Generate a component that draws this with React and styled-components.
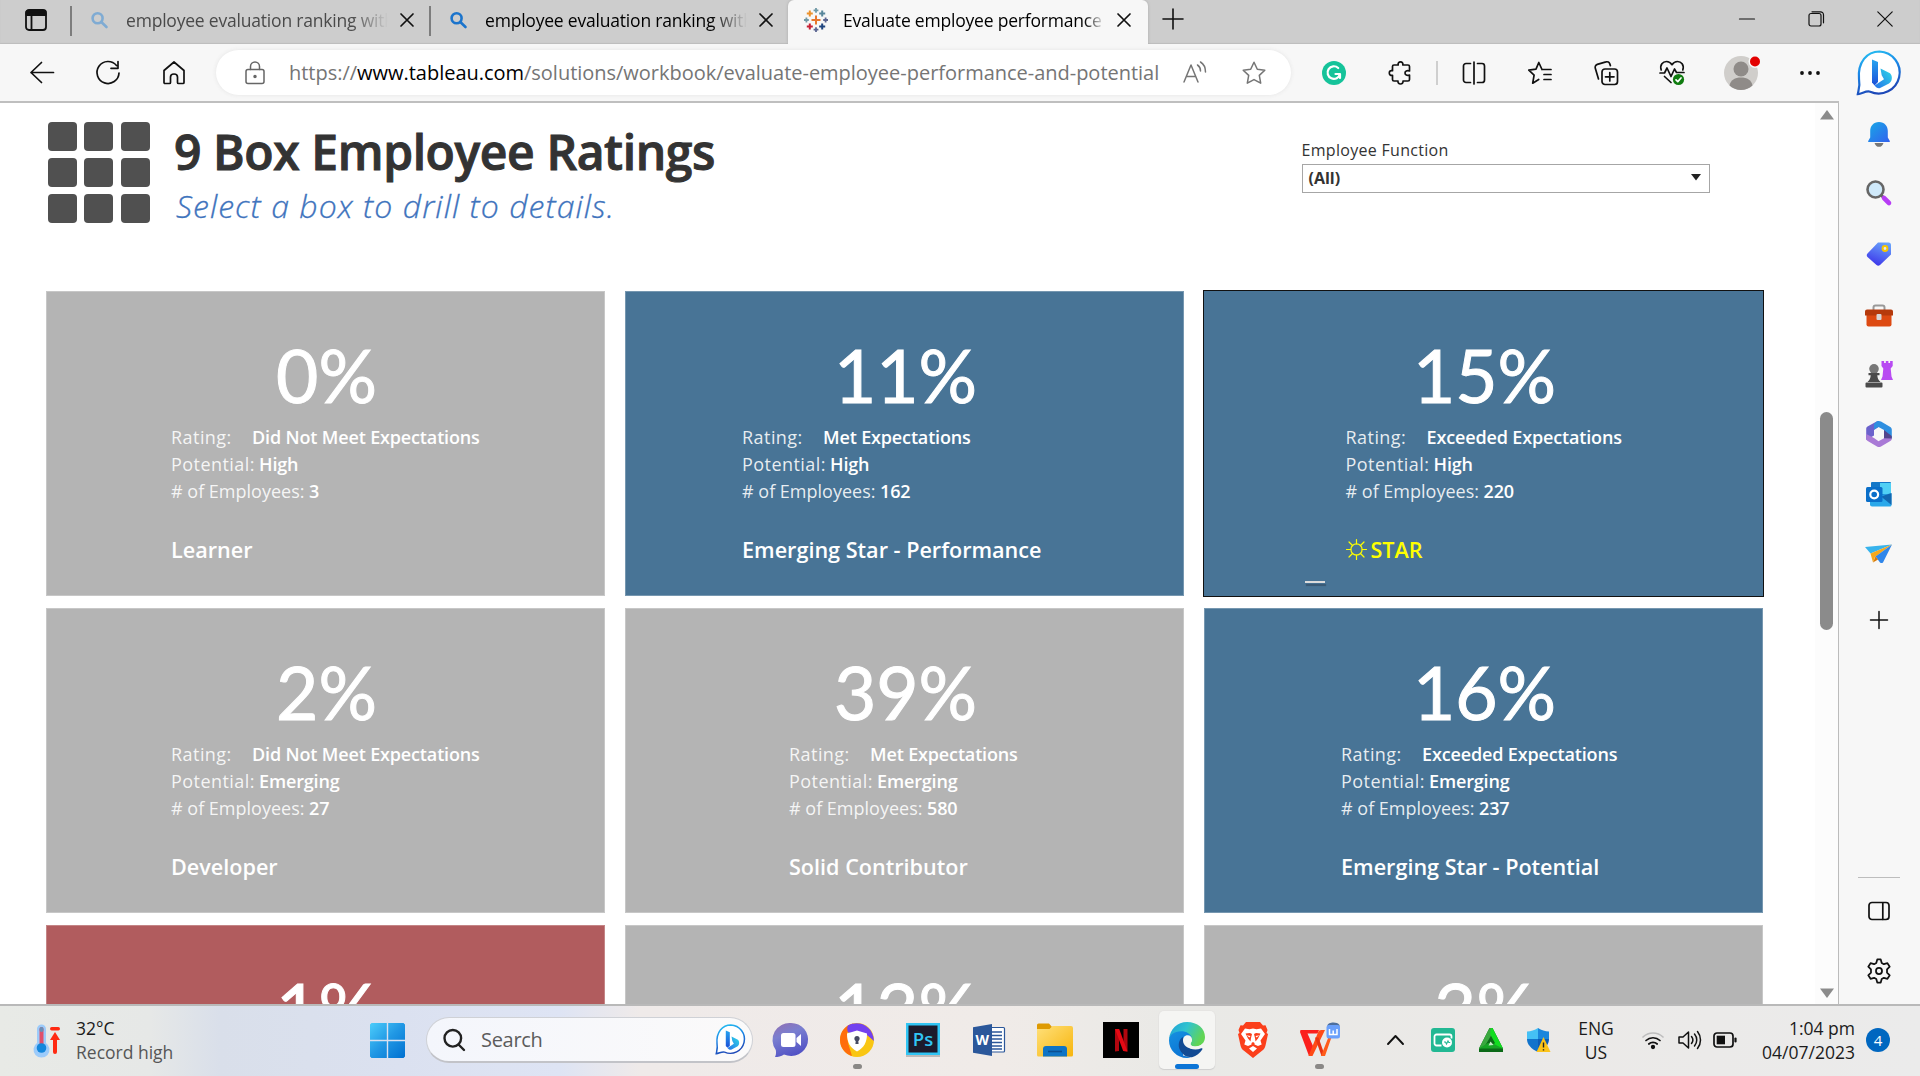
import React from "react";
import styled, { createGlobalStyle, css } from "styled-components";

const ui = `"Open Sans", "Noto Sans", sans-serif`;
const book = `"Open Sans", "Noto Sans", sans-serif`;
const figures = `Lato, "Open Sans", sans-serif`;

const Global = createGlobalStyle`
  * { box-sizing: border-box; }
  html, body { margin: 0; padding: 0; background: #fff; }
  body { font-family: ${ui}; color: #111; overflow: hidden; }
  svg { display: block; flex: none; overflow: visible; }
`;

/* ---------- window frame ---------- */
const Window = styled.div`
  width: 1920px;
  height: 1076px;
  display: flex;
  flex-direction: column;
  overflow: hidden;
`;
const TabStrip = styled.header`
  flex: none;
  height: 44px;
  display: flex;
  align-items: stretch;
  background: #cdcdcd;
  box-shadow: inset 0 -1px 1px #bdbdbd;
`;
const TabMenu = styled.div`
  width: 71px;
  display: flex;
  align-items: center;
  padding: 0 0 4px 25px;
`;
const Tab = styled.div`
  width: ${(p) => p.$w}px;
  display: flex;
  align-items: center;
  padding: 0 0 4px ${(p) => p.$pad}px;
  ${(p) =>
    p.$active &&
    css`
      background: #f7f7f7;
      border-radius: 6px 6px 0 0;
      box-shadow: 0 0 3px #aaa;
    `}
`;
const TabTitle = styled.span`
  flex: none;
  width: 262px;
  margin-left: ${(p) => p.$gap}px;
  overflow: hidden;
  white-space: nowrap;
  font-size: 17.5px;
  line-height: 26px;
  letter-spacing: -0.2px;
  color: ${(p) => (p.$dim ? "#4a4a4a" : "#000")};
  mask-image: linear-gradient(90deg, #000 ${(p) => p.$fade || 86}%, transparent 100%);
`;
const CloseSlot = styled.span`
  flex: none;
  margin-left: 12px;
`;
const TabRule = styled.i`
  align-self: flex-start;
  width: 2px;
  height: 30px;
  margin-top: 6px;
  margin-left: ${(p) => p.$shift || 0}px;
  background: #7d7d7d;
`;
const NewTab = styled.div`
  display: flex;
  align-items: center;
  padding: 0 0 6px 14px;
`;
const Controls = styled.div`
  margin-left: auto;
  width: 208px;
  display: flex;
  align-items: center;
  padding-bottom: 6px;
`;
const Control = styled.div`
  width: 69.5px;
  display: flex;
  justify-content: center;
`;

const Browser = styled.div`
  flex: none;
  height: 960px;
  display: flex;
  background: #f7f7f7;
`;
const Page = styled.div`
  width: 1839px;
  display: flex;
  flex-direction: column;
`;

/* ---------- toolbar ---------- */
const Toolbar = styled.nav`
  flex: none;
  height: 59px;
  display: flex;
  align-items: center;
  padding-left: 9px;
  border-bottom: 2px solid #bfbfbf;
  background: #f7f7f7;
`;
const Slot = styled.div`
  flex: none;
  width: ${(p) => p.$w || 66}px;
  display: flex;
  justify-content: center;
  align-items: center;
`;
const Address = styled.div`
  flex: none;
  width: 1075px;
  height: 45px;
  margin: 0 10px 0 9px;
  border-radius: 23px;
  background: #fff;
  box-shadow: 0 0 4px #e4e4e4;
  display: flex;
  align-items: center;
  padding-left: 29px;
`;
const Url = styled.div`
  flex: none;
  width: 876px;
  margin-left: 24px;
  font-size: 20px;
  line-height: 28px;
  letter-spacing: -0.02px;
  white-space: nowrap;
  color: #757575;
  b { font-weight: 400; color: #000; }
`;
const AddressIcon = styled.div`
  flex: none;
  width: 59px;
  display: flex;
  justify-content: center;
`;
const ToolRule = styled.i`
  flex: none;
  width: 2px;
  height: 24px;
  margin: 0 3px 0 3px;
  background: #cfcfcf;
`;

/* ---------- workbook ---------- */
const Content = styled.div`
  flex: 1;
  min-height: 0;
  display: flex;
`;
const Workbook = styled.main`
  width: 1815px;
  overflow: hidden;
  background: #fff;
  font-family: ${book};
  padding: 19px 0 0 46px;
`;
const Head = styled.div`
  height: 169px;
  display: flex;
`;
const BoxLogo = styled.div`
  display: grid;
  grid-template-columns: repeat(3, 29px);
  grid-auto-rows: 29px;
  column-gap: 7.5px;
  row-gap: 7px;
  align-content: start;
  margin-left: 1.5px;
  i { background: #505050; border-radius: 4px; }
`;
const Titles = styled.div`
  flex: none;
  width: 1125px;
  padding-left: 24.5px;
`;
const Title = styled.h1`
  margin: -2px 0 0;
  font-size: 48px;
  line-height: 64px;
  font-weight: 600;
  letter-spacing: -0.4px;
  color: #333;
  white-space: nowrap;
  -webkit-text-stroke: 1px #333;
`;
const Subtitle = styled.p`
  margin: -1px 0 0 2px;
  font-size: 32px;
  line-height: 46px;
  font-style: italic;
  font-weight: 300;
  letter-spacing: 1.05px;
  color: #3f74bd;
  white-space: nowrap;
  -webkit-text-stroke: 0.3px #3f74bd;
`;
const Filter = styled.label`
  display: block;
  flex: none;
  width: 408px;
  margin-left: 27px;
  padding-top: 16px;
  font-size: 16px;
  line-height: 24px;
  letter-spacing: 0.3px;
  color: #333;
`;
const Select = styled.div`
  height: 29px;
  margin-top: 2px;
  padding: 0 8px 2px 6px;
  border: 1px solid #a6a6a6;
  display: flex;
  align-items: center;
  justify-content: space-between;
  font-size: 16px;
  font-weight: 700;
  letter-spacing: 0;
`;
const Boxes = styled.section`
  display: grid;
  grid-template-columns: repeat(3, 559px);
  grid-auto-rows: 305px;
  column-gap: 20px;
  row-gap: 12px;
`;
const tones = { gray: "#b4b4b4", blue: "#487496", red: "#b15c5e" };
const Box = styled.article`
  position: relative;
  padding-top: 33px;
  background: ${(p) => tones[p.$tone]};
  color: #fff;
  box-shadow: ${(p) => (p.$selected ? "0 0 0 1px #111" : "inset 0 0 0 1px rgba(255,255,255,.25)")};
`;
const Percent = styled.div`
  height: 100px;
  line-height: 103px;
  font-family: ${figures};
  font-size: 73px;
  text-align: center;
  padding-left: 2px;
  -webkit-text-stroke: 1px #fff;
`;
const Facts = styled.div`
  padding-left: ${(p) => p.$inset}px;
  font-size: 18px;
  line-height: 27px;
  white-space: pre;
  b { font-weight: 600; letter-spacing: -0.15px; }
`;
const Key = styled.span`
  display: inline-block;
  width: ${(p) => p.$w}px;
  letter-spacing: ${(p) => p.$ls || 0}px;
  color: rgba(255, 255, 255, 0.88);
`;
const BoxName = styled.div`
  display: flex;
  align-items: center;
  gap: 4px;
  margin-top: 28.5px;
  padding-left: ${(p) => p.$inset}px;
  font-size: 21.6px;
  line-height: 32px;
  font-weight: 600;
  color: ${(p) => (p.$star ? "#ffff00" : "#fff")};
  white-space: nowrap;
`;
const Dash = styled.i`
  position: absolute;
  left: 101px;
  bottom: 13px;
  width: 20px;
  height: 2px;
  background: #dcdcdc;
  box-shadow: 1px 3px 1px rgba(40, 60, 80, 0.5);
`;
const ScrollTrack = styled.div`
  width: 24px;
  background: #fcfcfc;
  border-right: 1px solid #bcbcbc;
  display: flex;
  flex-direction: column;
  align-items: center;
  padding: 7px 0 6px;
`;
const Thumb = styled.i`
  width: 13px;
  height: 218px;
  margin-top: 292px;
  margin-bottom: auto;
  border-radius: 7px;
  background: #8b8b8b;
`;

/* ---------- sidebar ---------- */
const Sidebar = styled.aside`
  width: 81px;
  display: flex;
  flex-direction: column;
  align-items: center;
  padding-right: 1px;
`;
const SideItem = styled.div`
  flex: none;
  height: ${(p) => p.$h || 60}px;
  display: flex;
  align-items: center;
`;
const SideRule = styled.i`
  width: 42px;
  height: 1px;
  margin-top: auto;
  margin-bottom: 7px;
  background: #bdbdbd;
`;

/* ---------- taskbar ---------- */
const Taskbar = styled.footer`
  flex: 1;
  display: flex;
  align-items: center;
  border-top: 2px solid #b9b9b9;
  padding-bottom: 2px;
  background: linear-gradient(90deg, #e8eae6 0, #e6e8e7 150px, #d9dfea 220px, #dbe1f0 400px, #dee4f4 560px, #efeae9 640px, #f0ebe8 1000px, #e9e9e6 1180px, #ebe9e7 1500px, #ebebeb 1920px);
`;
const Weather = styled.div`
  width: 354px;
  display: flex;
  align-items: center;
  padding-left: 33px;
  gap: 15px;
`;
const TwoLines = styled.div`
  font-size: 17.5px;
  line-height: 24px;
  white-space: nowrap;
  text-align: ${(p) => p.$align || "left"};
  width: ${(p) => (p.$w ? p.$w + "px" : "auto")};
  color: #1b1b1b;
  span { color: #565656; }
`;
const SearchBox = styled.div`
  width: 327px;
  height: 46px;
  margin: 0 5px;
  border-radius: 23px;
  border: 1px solid #cfd1d6;
  border-bottom: 2px solid #c2c3c8;
  background: linear-gradient(90deg, #f4f6fc, #fbfafa);
  display: flex;
  align-items: center;
  padding: 0 6px 0 16px;
  font-size: 20px;
  color: #5c5c5c;
  span { flex: 1; padding-left: 16px; letter-spacing: -0.3px; }
`;
const TaskButton = styled.div`
  position: relative;
  flex: none;
  width: 66px;
  height: 58px;
  display: flex;
  align-items: center;
  justify-content: center;
  &::before {
    content: "";
    position: absolute;
    z-index: 0;
    inset: 0 5px;
    border-radius: 5px;
    background: ${(p) => (p.$on ? "#f5f5f3" : "transparent")};
    box-shadow: ${(p) => (p.$on ? "0 1px 1px #cfcfcf, 0 0 0 1px #e6e5e3" : "none")};
  }
  &::after {
    content: "";
    position: absolute;
    bottom: ${(p) => (p.$on ? 0 : 0)}px;
    width: ${(p) => (p.$on ? 24 : p.$run ? 9 : 0)}px;
    height: 5px;
    border-radius: 3px;
    background: ${(p) => (p.$on ? "#0b74d6" : "#8a8886")};
  }
  svg { position: relative; }
`;
const Gap = styled.i`
  flex: none;
  width: ${(p) => p.$w}px;
`;
const Badge = styled.span`
  width: 24px;
  height: 24px;
  margin-left: 11px;
  border-radius: 50%;
  background: #0067c0;
  color: #fff;
  font-size: 15px;
  line-height: 24px;
  text-align: center;
`;

/* ---------- icons ---------- */
const Ico = ({ s = 24, w, h, sw = 1.5, c = "#111", fill = "none", vb, children }) => (
  <svg width={w || s} height={h || s} viewBox={vb || `0 0 ${w || s} ${h || s}`} fill={fill} stroke={c} strokeWidth={sw} strokeLinecap="round" strokeLinejoin="round">
    {children}
  </svg>
);
const Close = () => <Ico s={14} sw={1.7}><path d="M1 1l12 12M13 1L1 13" /></Ico>;
const Lens = ({ c }) => <Ico s={17} sw={2.6} c={c}><circle cx="6.6" cy="6.2" r="5" /><path d="M10.3 10L15.5 15" /></Ico>;
const TableauMark = () => {
  const cross = (x, y, r, c, k, w = 2) => <path key={k} d={`M${x - r} ${y}h${2 * r}M${x} ${y - r}v${2 * r}`} stroke={c} strokeWidth={w} />;
  return (
    <svg width="24" height="24" viewBox="0 0 24 24">
      {cross(12, 12, 4.5, "#e8762d", "a", 2)}
      {cross(12, 2.4, 2.4, "#7099a6", "b", 1.8)}
      {cross(12, 21.6, 2.4, "#5b6591", "c", 1.8)}
      {cross(2.4, 12, 2.4, "#7099a6", "d", 1.8)}
      {cross(21.6, 12, 2.4, "#5b6591", "e", 1.8)}
      {cross(5.8, 5.6, 3, "#eb912c", "f", 2)}
      {cross(18.2, 5.6, 3, "#59879b", "g", 2)}
      {cross(5.8, 18.4, 3, "#c72035", "h", 2)}
      {cross(18.2, 18.4, 3, "#1f447e", "i", 2)}
    </svg>
  );
};
const Bing = ({ w = 46 }) => (
  <svg width={w} height={w} viewBox="0 0 46 46">
    <defs>
      <linearGradient id="bo" x1="0" y1="0" x2="0.3" y2="1"><stop offset="0" stopColor="#27c4f2" /><stop offset=".5" stopColor="#1b86e6" /><stop offset="1" stopColor="#1d49b8" /></linearGradient>
      <linearGradient id="bi" x1="0" y1="0" x2="0" y2="1"><stop offset="0" stopColor="#27a5f0" /><stop offset="1" stopColor="#1b4fd8" /></linearGradient>
      <linearGradient id="bj" x1="1" y1="0" x2="0" y2="1"><stop offset="0" stopColor="#2fd9e6" /><stop offset="1" stopColor="#2672ea" /></linearGradient>
    </defs>
    <path d="M23.5 1.5a21 21 0 1 1-9.3 40.2c-4-1.3-8 2-12.4 2.4C2.5 40 4.3 36 3 29 1.5 12 11 1.5 23.5 1.5z" fill="#fff" stroke="url(#bo)" strokeWidth="2.2" />
    <path d="M16 9.5l6 2.6v20l-3.4 3.3L16 32.5z" fill="url(#bi)" />
    <path d="M24.5 18.5l9.500 4.800c3 3 2.200 8.200-1 10.200l-9 4.600c-2 .7-4.200-.8-5.400-2.600l9.400-6.200-2.300-4z" fill="url(#bj)" />
  </svg>
);
const Gear = () => (
  <Ico s={26} sw={1.6} vb="0 0 24 24">
    <circle cx="12" cy="12" r="2.8" />
    <path d="M10.4 1.300h3.200l.9 3.300 2 1.100 3.300-.9 2.100 3.200-2.500 2.500v3l2.500 2.500-2.100 3.200-3.300-.9-2 1.100-.9 3.300h-3.200l-.9-3.300-2-1.100-3.300.9-2.100-3.200 2.500-2.500v-3L2.100 8l2.100-3.200 3.300.9 2-1.100z" />
  </Ico>
);

/* ---------- data ---------- */
const boxes = [
  { pct: "0%", tone: "gray", rating: "Did Not Meet Expectations", pot: "High", n: "3", name: "Learner", inset: 125 },
  { pct: "11%", tone: "blue", rating: "Met Expectations", pot: "High", n: "162", name: "Emerging Star - Performance", inset: 117 },
  { pct: "15%", tone: "blue", rating: "Exceeded Expectations", pot: "High", n: "220", name: "STAR", inset: 141.5, star: true },
  { pct: "2%", tone: "gray", rating: "Did Not Meet Expectations", pot: "Emerging", n: "27", name: "Developer", inset: 125 },
  { pct: "39%", tone: "gray", rating: "Met Expectations", pot: "Emerging", n: "580", name: "Solid Contributor", inset: 164 },
  { pct: "16%", tone: "blue", rating: "Exceeded Expectations", pot: "Emerging", n: "237", name: "Emerging Star - Potential", inset: 137 },
  { pct: "1%", tone: "red" },
  { pct: "13%", tone: "gray" },
  { pct: "3%", tone: "gray" },
];

const RatingBox = ({ b }) => (
  <Box $tone={b.tone} $selected={b.star}>
    <Percent>{b.pct}</Percent>
    {b.name && (
      <>
        <Facts $inset={b.inset}>
          <div><Key $w={81} $ls={0.45}>Rating:</Key><b>{b.rating}</b></div>
          <div><Key $w={88} $ls={0.45}>Potential:</Key><b>{b.pot}</b></div>
          <div><Key $w={138}># of Employees:</Key><b>{b.n}</b></div>
        </Facts>
        <BoxName $inset={b.inset} $star={b.star}>
          {b.star && (
            <Ico s={21} sw={1.2} c="#ffff00">
              <circle cx="10.5" cy="10.5" r="5.6" />
              <path d="M10.5 4.800V.5M10.5 16.200v4.300M4.800 10.500H.5M16.200 10.500h4.300M6.500 6.500L3 3M14.500 14.500L18 18M6.500 14.500L3 18M14.500 6.500L18 3" />
            </Ico>
          )}
          {b.name}
        </BoxName>
      </>
    )}
    {b.star && <Dash />}
  </Box>
);

const WindowTabs = () => (
  <TabStrip>
    <TabMenu>
      <Ico w={22} h={22} sw={1.8}><rect x="1" y="1" width="20" height="20" rx="3" /><path d="M1.500 2.500h19v3.500h-19z" fill="#111" /><path d="M6.500 6v15" /></Ico>
    </TabMenu>
    <TabRule $shift={-1} />
    <Tab $w={357} $pad={19}>
      <Lens c="#7fabd3" />
      <TabTitle $gap={18} $dim>employee evaluation ranking with</TabTitle>
      <CloseSlot><Close /></CloseSlot>
    </Tab>
    <TabRule />
    <Tab $w={357} $pad={19}>
      <Lens c="#1b74cc" />
      <TabTitle $gap={18}>employee evaluation ranking with</TabTitle>
      <CloseSlot><Close /></CloseSlot>
    </Tab>
    <Tab $w={360} $pad={16} $active>
      <TableauMark />
      <TabTitle $gap={15} $fade={92}>Evaluate employee performance a</TabTitle>
      <CloseSlot><Close /></CloseSlot>
    </Tab>
    <NewTab><Ico s={22} sw={1.6}><path d="M11 1v20M1 11h20" /></Ico></NewTab>
    <Controls>
      <Control><Ico s={16} sw={1.2}><path d="M.5 8h15" /></Ico></Control>
      <Control><Ico s={16} sw={1.2}><rect x="1" y="2.500" width="12" height="12.500" rx="2" /><path d="M4 .8h8.500a3 3 0 0 1 3 3v8" /></Ico></Control>
      <Control><Ico s={16} sw={1.2}><path d="M.8.8l14.400 14.400M15.200.8L.8 15.200" /></Ico></Control>
    </Controls>
  </TabStrip>
);

const BrowserToolbar = () => (
  <Toolbar>
    <Slot><Ico s={24} sw={1.7}><path d="M23.500 11.500H1M11.500 1.500L1 11.500l10.500 10" /></Ico></Slot>
    <Slot><Ico s={24} sw={1.7}><path d="M20.500 4.500A11 11 0 1 0 23 12M22 .5v6.800h-7" /></Ico></Slot>
    <Slot><Ico s={24} sw={1.7}><path d="M2 9.500L12 1l10 8.500V21.500a1 1 0 0 1-1 1h-4.500a1 1 0 0 1-1-1V16c0-2-1.300-3-3.500-3s-3.500 1-3.500 3v5.500a1 1 0 0 1-1 1H3a1 1 0 0 1-1-1z" /></Ico></Slot>
    <Address>
      <Ico w={20} h={24} sw={1.5} c="#666"><rect x="1" y="8.500" width="18" height="14" rx="2" /><path d="M5.500 8.500V5.500a4.500 4.500 0 0 1 9 0v3" /><circle cx="10" cy="15.500" r="1" fill="#666" /></Ico>
      <Url>https://<b>www.tableau.com</b>/solutions/workbook/evaluate-employee-performance-and-potential</Url>
      <AddressIcon><Ico s={24} c="#757575"><path d="M1 21L8 4l7 17M3.500 15.500h9M14.500 4c2 1.300 3 3.200 3 6M17.500 1c3.500 2.200 5 5.500 5 10" /></Ico></AddressIcon>
      <AddressIcon><Ico s={24} c="#757575"><path d="M12 1.200l3.300 7 7.500 1-5.500 5.200 1.400 7.800L12 18.600l-6.700 3.600 1.400-7.800L1.200 9.200l7.500-1z" /></Ico></AddressIcon>
    </Address>
    <Slot>
      <Ico s={24} c="#fff" sw={2.2}><circle cx="12" cy="12" r="12" fill="#15c39a" stroke="none" /><path d="M16.200 7A6.300 6.300 0 1 0 18 13h-4.500M18 13v4" /></Ico>
    </Slot>
    <Slot><Ico s={24} sw={1.7}><path d="M6 4h4.200c-.4-1.900.6-3.200 2.300-3.200S15.200 2.100 14.800 4H20a1.500 1.500 0 0 1 1.500 1.500V10c-2.500-.8-4.500 0-4.500 2s2 2.800 4.500 2v4.500A1.500 1.500 0 0 1 20 20h-5c.3 1.800-.8 3-2.500 3s-2.800-1.200-2.500-3H6a1.500 1.500 0 0 1-1.500-1.500v-4.200c-2 .5-3.200-.6-3.200-2.300s1.200-2.800 3.200-2.300V5.500A1.500 1.500 0 0 1 6 4z" /></Ico></Slot>
    <ToolRule />
    <Slot><Ico s={24} sw={1.7}><path d="M12 1v22M8.500 2.500H4a2.500 2.500 0 0 0-2.500 2.500v14A2.500 2.500 0 0 0 4 21.500h4.500M15.500 2.500H20A2.500 2.500 0 0 1 22.500 5v14a2.500 2.500 0 0 1-2.500 2.500h-4.500" /></Ico></Slot>
    <Slot><Ico s={24} sw={1.7}><path d="M14 8.500h9M14 8.500L10.800 1.500 8 8.200.8 9.200l5.300 5-1.400 8 6-3.700M16 13.500h7M16 18.500h7" /></Ico></Slot>
    <Slot><Ico s={24} sw={1.7}><rect x="8" y="8" width="15.500" height="15.500" rx="3" /><path d="M15.800 11.500v8.500M11.500 15.800H20M4.500 18L1.300 7.200A3 3 0 0 1 3.300 3.400L12 .9a3 3 0 0 1 3.800 2l.6 1.700" /></Ico></Slot>
    <Slot>
      <Ico s={26} sw={1.7}><path d="M2.200 10C.5 4.500 4 1.500 7.500 1.500c2.300 0 4.200 1.200 5.500 3.200 1.300-2 3.200-3.200 5.500-3.200 3.500 0 7 3 5.300 8.500M1 13h4.500L8 8l4 8.500L15.500 9l2 3.500H25M5.500 16.500l6.500 6" /><circle cx="19.500" cy="19.500" r="5.600" fill="#107c10" stroke="none" /><path d="M17 19.800l1.800 1.800 3.200-3.600" stroke="#fff" /></Ico>
    </Slot>
    <Slot $w={72}>
      <Ico s={34} c="none"><circle cx="17" cy="17" r="17" fill="#d0cecb" /><circle cx="17" cy="13" r="7.500" fill="#8f8b88" /><path d="M5.500 29.500C6.500 24 11 21.500 17 21.500S27.500 24 28.500 29.500A17 17 0 0 1 5.500 29.500z" fill="#8f8b88" /><circle cx="31" cy="5.500" r="6.500" fill="#f7f7f7" /><circle cx="31" cy="5.500" r="5" fill="#e30000" /></Ico>
    </Slot>
    <Slot $w={66}><Ico w={22} h={6} c="none"><g fill="#111"><circle cx="3" cy="3" r="1.900" /><circle cx="11" cy="3" r="1.900" /><circle cx="19" cy="3" r="1.900" /></g></Ico></Slot>
  </Toolbar>
);

const SidePanel = () => (
  <Sidebar>
    <SideItem $h={58}><Bing /></SideItem>
    <SideItem $h={64}>
      <svg width="22" height="25" viewBox="0 0 22 25"><defs><linearGradient id="bell" x2="1" y2="1"><stop stopColor="#17a9e6" /><stop offset="1" stopColor="#3361ee" /></linearGradient></defs><path d="M6.500 21h9c-1 3-2.500 3.800-4.500 3.800S7.500 24 6.500 21z" fill="#777" /><path d="M11 0c5.500 0 8.800 4 8.800 9v6.500l2 3.500c.2.600 0 1-.6 1H.8c-.6 0-.8-.4-.6-1l2-3.500V9C2.200 4 5.500 0 11 0z" fill="url(#bell)" /></svg>
    </SideItem>
    <SideItem $h={53}>
      <svg width="26" height="26" viewBox="0 0 26 26"><path d="M15 15l2.500 2.500" stroke="#666" strokeWidth="3" /><path d="M18 18l5 5" stroke="#b73df5" strokeWidth="4.600" strokeLinecap="round" /><circle cx="9.500" cy="9.500" r="8" fill="#cfe9fa" stroke="#666" strokeWidth="2.600" /></svg>
    </SideItem>
    <SideItem $h={70}>
      <svg width="26" height="26" viewBox="0 0 26 26"><defs><linearGradient id="tag" x1=".8" x2=".4" y2="1"><stop stopColor="#6aa5fb" /><stop offset="1" stopColor="#3d37ea" /></linearGradient></defs><path d="M12 1.500h10.500A2.500 2.500 0 0 1 25 4v9.500L14 24c-1.200 1-2.300 1-3.500 0L1.500 16c-1-1-1-2.500 0-3.500z" fill="url(#tag)" /><circle cx="19" cy="7.500" r="2.400" fill="#dfe6ff" stroke="#f7c600" strokeWidth="2" /></svg>
    </SideItem>
    <SideItem $h={52}>
      <svg width="28" height="23" viewBox="0 0 28 23"><path d="M8.500 7V3.500a2 2 0 0 1 2-2h7a2 2 0 0 1 2 2V7" fill="none" stroke="#999" strokeWidth="2" /><rect x="1.500" y="9" width="25" height="13.500" rx="2" fill="#dd4a12" /><path d="M2 5.500h24a2 2 0 0 1 2 2v4H0v-4a2 2 0 0 1 2-2z" fill="#b53a0c" /><rect x="11.500" y="10" width="5" height="6" rx="1" fill="#d7d7d7" /></svg>
    </SideItem>
    <SideItem $h={66}>
      <svg width="28" height="28" viewBox="0 0 28 28"><path d="M16.500 1h2.600v2h1.700V1h2.600v2h1.700V1h2.600v5l-2 2.500.8 8 1.500 3.500h-12l1.500-3.500.8-8-1.800-2.500z" fill="#b84bf2" /><circle cx="9" cy="8.800" r="4.800" fill="#777" /><path d="M3.500 13h11v2.300h-2.200c.2 3.200 1 4.700 3.200 6.700H2.500c2.200-2 3-3.500 3.200-6.700H3.500zM.5 23.500a1 1 0 0 1 1-1h15a1 1 0 0 1 1 1v3a1 1 0 0 1-1 1h-15a1 1 0 0 1-1-1z" fill="#4b4b4b" /></svg>
    </SideItem>
    <SideItem $h={54}>
      <svg width="26" height="26" viewBox="0 0 26 26"><path d="M11.500 0L1.500 5.500C.6 6.100.2 7 .2 8v11L8 14.500V9l4.500-3z" fill="#6b62cc" /><path d="M11 .3c1.500-.6 2.800-.4 4 .3l9.300 5.400c1 .6 1.500 1.600 1.500 2.700v9L18 13.500V9L12.500 6 8 8.500V3z" fill="#2f8fe0" /><path d="M25.800 17.500c0 1.200-.5 2-1.500 2.600L15 25.500c-1.400.7-2.700.7-4 0L1.700 20C.8 19.500.3 18.600.2 17.600V13L8 17l4.500 3.200 5.500-3v-4z" fill="#a97ad6" /><path d="M18 9v8.200l7.800.3-.1-2.500z" fill="#54458c" /><circle cx="13" cy="13" r="4.800" fill="#f7f7f7" /></svg>
    </SideItem>
    <SideItem $h={66}>
      <svg width="26" height="25" viewBox="0 0 26 25"><rect x="5" y="0" width="20" height="14" rx="1" fill="#1478c8" /><rect x="14" y="1" width="11" height="11" fill="#50d0f5" /><path d="M4 14l21.500-2.500V23a1.500 1.500 0 0 1-1.500 1.500H6A2 2 0 0 1 4 22.500z" fill="#2aa8ea" /><path d="M15 14.500l10.500-3.500v12z" fill="#1267b0" /><rect x="0" y="5" width="16.500" height="15" rx="1.500" fill="#0a6fc9" /><circle cx="8.200" cy="12.500" r="3.900" fill="none" stroke="#fff" strokeWidth="2.200" /></svg>
    </SideItem>
    <SideItem $h={54}>
      <svg width="28" height="20" viewBox="0 0 28 20"><path d="M0 3L27 .5 5.500 9.500z" fill="#37b3ec" /><path d="M5.500 9.500L27 .5 10 13 8 18.500z" fill="#f5a81c" /><path d="M27 .5L18 18.500c-1 .8-2 .8-3 0L10.500 12.500z" fill="#2f86ea" /><path d="M8 18.500l2.500-6 2.500 3z" fill="#d97908" /></svg>
    </SideItem>
    <SideItem $h={77}><Ico s={18} sw={1.5}><path d="M9 .5v17M.5 9h17" /></Ico></SideItem>
    <SideRule />
    <SideItem $h={52}><Ico w={22} h={18} sw={1.7}><rect x="1" y="0.500" width="20" height="17" rx="3" /><path d="M14.800.8v16.500" /></Ico></SideItem>
    <SideItem $h={67}><Gear /></SideItem>
  </Sidebar>
);

const Tasks = () => (
  <Taskbar>
    <Weather>
      <svg width="28" height="34" viewBox="0 0 28 34"><path d="M4 6a4.500 4.500 0 0 1 9 0v14a8 8 0 1 1-9 0z" fill="#9ccbfa" /><rect x="6.500" y="4" width="4" height="20" rx="2" fill="#e0506a" /><rect x="6.500" y="4" width="4" height="5" rx="2" fill="#6a8fb5" /><circle cx="8.500" cy="25" r="4.800" fill="#1387dc" /><rect x="17" y="4" width="10" height="3.500" rx="1.700" fill="#ff2a12" /><path d="M22 9l5 8h-3v12a2 2 0 0 1-4 0V17h-3z" fill="#ff2a12" /></svg>
      <TwoLines>32°C<br /><span>Record high</span></TwoLines>
    </Weather>
    <Slot $w={67}>
      <svg width="35" height="35" viewBox="0 0 35 35"><defs><linearGradient id="win" gradientUnits="userSpaceOnUse" x2="35" y2="35"><stop stopColor="#4ccdfb" /><stop offset=".5" stopColor="#2097e4" /><stop offset="1" stopColor="#0070d0" /></linearGradient></defs><path d="M1.500 0H16.800V16.800H0V1.500zM18.200 0H33.500L35 1.500V16.800H18.200zM0 18.200H16.800V35H1.500L0 33.500zM18.200 18.200H35V33.500L33.500 35H18.200z" fill="url(#win)" /></svg>
    </Slot>
    <SearchBox>
      <Ico s={22} sw={2.4} c="#222"><circle cx="9.800" cy="9.300" r="8.300" /><path d="M15.500 15.500l5.500 5.500" /></Ico>
      <span>Search</span>
      <Bing w={31} />
    </SearchBox>
    <TaskButton>
      <svg width="34" height="34" viewBox="0 0 34 34"><defs><linearGradient id="chat" x1=".2" y1="0" x2=".6" y2="1"><stop stopColor="#8f71b5" /><stop offset=".35" stopColor="#7a7fd0" /><stop offset="1" stopColor="#4f4fc4" /></linearGradient></defs><path d="M17 0a17 16.500 0 1 1-7 31.500C7 33.500 4 34 1 34c1-2 1.300-4 .8-7A17 17 0 0 1 17 0z" fill="url(#chat)" /><rect x="7" y="10" width="14.500" height="14" rx="2.500" fill="#fff" /><path d="M22.500 15l4.500-4v12l-4.500-4z" fill="#fff" /></svg>
    </TaskButton>
    <TaskButton $run>
      <svg width="34" height="34" viewBox="0 0 34 34"><circle cx="17" cy="17" r="17" fill="#f9c613" /><path d="M13 .5C5 2.500 0 9 0 17c0 7.500 5 14 12 16L8 20 7 10z" fill="#ff6d0c" /><path d="M8 2.500C18-3 33 2 34 18L27 12 8 9.500C7 7 7 4.500 8 2.500z" fill="#7341ef" /><path d="M7 10.500L17 7.500l10 3c0 9-3 14-10 18-7-4-10-9-10-18z" fill="#fff" /><circle cx="17" cy="15.500" r="2.600" fill="#454a63" /><path d="M16 15h2l.6 6h-3.200z" fill="#454a63" /></svg>
    </TaskButton>
    <TaskButton>
      <svg width="34" height="34" viewBox="0 0 34 34"><rect y="2" width="34" height="32" fill="#9b9b9b" opacity=".6" /><rect width="34" height="32" fill="#31c5f4" /><rect x="2.500" y="2.500" width="29" height="27" fill="#1c1b2c" /><text x="17" y="22.500" textAnchor="middle" fontFamily="Open Sans, sans-serif" fontSize="18.500" fontWeight="600" fill="#31c5f4">Ps</text></svg>
    </TaskButton>
    <TaskButton>
      <svg width="32" height="32" viewBox="0 0 32 32"><rect x="14" y="3.500" width="17.500" height="24.500" rx="1" fill="#fff" stroke="#2b579a" strokeWidth="1.200" /><path d="M18 8h11M18 11.500h11M18 15h11M18 18.500h11M18 22h11M18 25h11" stroke="#2b579a" strokeWidth="1.500" /><path d="M0 3.200L19 0v32L0 28.800z" fill="#2b579a" /><text x="9.300" y="21" textAnchor="middle" fontFamily="Open Sans, sans-serif" fontSize="14" fontWeight="700" fill="#fff">W</text></svg>
    </TaskButton>
    <TaskButton>
      <svg width="36" height="34" viewBox="0 0 36 34"><defs><linearGradient id="fold" x2="1" y2="1"><stop stopColor="#ffe07a" /><stop offset="1" stopColor="#f7b50d" /></linearGradient></defs><path d="M0 2a1.500 1.500 0 0 1 1.500-1.500H12L15 4v4H0z" fill="#de9a02" /><path d="M0 6h12.500L15.500 3H34a2 2 0 0 1 2 2v27a1.500 1.500 0 0 1-1.500 1.500h-33A1.500 1.500 0 0 1 0 32z" fill="url(#fold)" /><path d="M6 33.500V26a3 3 0 0 1 3-3h18a3 3 0 0 1 3 3v7.500z" fill="#0f74c4" /><path d="M11 28.500h14" stroke="#0b4f92" strokeWidth="1.600" /></svg>
    </TaskButton>
    <TaskButton>
      <svg width="36" height="36" viewBox="0 0 36 36"><rect width="36" height="36" fill="#000" /><path d="M12 7h4v22l-4 .6zM20.500 7h4v22.600l-4-.6z" fill="#b1060f" /><path d="M12 7h4.200l8.300 22.600-4.300-.6z" fill="#e50914" /></svg>
    </TaskButton>
    <TaskButton $on>
      <svg width="36" height="36" viewBox="0 0 36 36">
        <defs>
          <linearGradient id="eg" x1="0" x2="1" y2=".4"><stop stopColor="#1d9fd8" /><stop offset=".5" stopColor="#31c3cf" /><stop offset="1" stopColor="#62d554" /></linearGradient>
          <linearGradient id="eb" x1="0" x2=".5" y2="1"><stop stopColor="#1690e0" /><stop offset="1" stopColor="#0b74d4" /></linearGradient>
        </defs>
        <path d="M0 17C1 7 8.500 0 18 0c10.500 0 18 6.500 18 15 0 5.500-4 9.500-10 9.500-3 0-4.500-1-4.500-2.500s1.500-2 1.500-4.500L14 11C8 11 3 12.500 0 17z" fill="url(#eg)" />
        <path d="M0 18.500C0 13 5.500 9.300 12 9.300c5.500 0 10 2.700 11 7.200l-8 1-1 16 8 2c-1.300.3-2.700.5-4 .5C8 36 0 28 0 18.500z" fill="url(#eb)" />
        <path d="M13.500 15c-3.500 3-5 8-2.500 13 2.500 5 7 7.500 12 7.200 4.500-1 8-4 10.300-7.700.5-1-.3-1.500-1-1.200-4 1.700-8 1.500-11 .2z" fill="#124a93" />
        <path d="M18.500 13.300c2.800 0 4.500 2 4.500 4.200 0 2.300-1.500 3-1.500 4.500s1.800 2.500 4.500 2.500c3.300 0 6-1 8-3l.5.500c0 2.500-5 5-9.500 5-6.500 0-11-4-11-8.500 0-3 1.800-5.200 4.500-5.200z" fill="#f5f5f3" />
      </svg>
    </TaskButton>
    <TaskButton>
      <svg width="30" height="36" viewBox="0 0 30 36">
        <path d="M8 0h14l3 3.500 2.500-.3L29.500 8l-1 3L30 12l-2.500 11.500c-.5 2-1.500 4-3.500 5.300L15 36l-9-7.200C4 27.500 3 25.500 2.500 23.500L0 12l1.500-1-1-3 2-4.800 2.500.3z" fill="#fb3f1b" />
        <path d="M7 6.500l4.500.7L15 6.500l3.500.7 4.500-.7 4 5.500-4.500 6.500 1.200 4-3.700 1.500-3.500-1.500v-1.500L15 20l-1.500 1v1.500L10 24l-3.700-1.500 1.200-4L3 12zM15 24l4 2.500-4 3.500-4-3.500z" fill="#fff" />
        <path d="M7.500 11.500l4.500-.5 2 1-1 4-.5 3.500-2.500-3zM22.500 11.500L18 11l-2 1 1 4 .5 3.500 2.500-3z" fill="#fb3f1b" />
        <path d="M8.500 13.300l4 .7-1 1.600zM21.500 13.300l-4 .7 1 1.600z" fill="#fff" />
      </svg>
    </TaskButton>
    <TaskButton $run>
      <svg width="40" height="36" viewBox="0 0 40 36">
        <path d="M1.500 8H20l-1.500 3.500h-10L14 24l-1.500 10H10L1 10z" fill="#fb1f1c" />
        <path d="M13.500 34H9.500L19 10.500c.6-1.700 1.600-2.500 3.300-2.500H26z" fill="#ff4a16" />
        <path d="M16 15.500l3.500 0L26 34h-3.500z" fill="#e93412" />
        <path d="M26 34h-4L31.500 10c.5-1.300 1.300-2 3-2h.5z" fill="#ff5c1a" />
        <path d="M28.500 3.500c0-3 9-4.500 12-.5v11H28.500z" fill="#4d6f9e" />
        <rect x="27.500" y="3" width="13.500" height="13.500" rx="2.500" fill="#6aa0fb" />
        <path d="M30.500 7v5.500h7.500V7M34.200 8.500v3.700" fill="none" stroke="#fff" strokeWidth="1.500" />
      </svg>
    </TaskButton>
    <Gap $w={19} />
    <Slot $w={48}><Ico w={17} h={10} sw={1.9}><path d="M1 9l7.500-8L16 9" /></Ico></Slot>
    <Slot $w={48}>
      <svg width="24" height="24" viewBox="0 0 24 24"><rect width="24" height="24" rx="3" fill="#22b893" /><path d="M10.500 17.500h-5a2 2 0 0 1-2-2v-7a2 2 0 0 1 2-2h13a2 2 0 0 1 2 2v2" fill="none" stroke="#fff" strokeWidth="1.800" /><circle cx="16" cy="14.500" r="5" fill="#fff" /><path d="M13 14h1.500l1 2 1.500-3 .8 1.500h1.400" fill="none" stroke="#22b893" strokeWidth="1.100" /></svg>
    </Slot>
    <Slot $w={48}>
      <svg width="24" height="24" viewBox="0 0 24 24">
        <path d="M10.500 0h3L24 20.500v3.500H0v-3.500z" fill="#0c6a18" />
        <path d="M10.500 0h1.500l1 6L5 19.500 0 20.500z" fill="#3aa83f" />
        <path d="M12 0h1.500L24 20.500 13.500 17 16 15 11 6z" fill="#12dd20" />
        <path d="M0 20.500L9 15l6 1 9 4.500z" fill="#17a525" />
        <path d="M9.500 17.500l2-4 3 3.500z" fill="#c8ecc8" />
      </svg>
    </Slot>
    <Slot $w={48}>
      <svg width="24" height="24" viewBox="0 0 24 24"><path d="M11 0c3.500 2.500 7 3.300 11 3.500V11H11z" fill="#1b86dc" /><path d="M11 11h11c0 5.500-4 9.800-11 13z" fill="#0b5cb5" /><path d="M11 0C7.500 2.500 4 3.300 0 3.500V11h11z" fill="#45c0f5" /><path d="M0 11h11v13C4 20.800 0 16.500 0 11z" fill="#1173cb" /><path d="M16.500 9l7 15h-14z" fill="#fcc419" /><path d="M16.500 14.500v5M16.500 21.200v1.200" stroke="#222" strokeWidth="1.400" /></svg>
    </Slot>
    <Slot $w={66}><TwoLines $align="center">ENG<br />US</TwoLines></Slot>
    <Gap $w={6} />
    <Slot $w={36}><Ico w={22} h={20} sw={1.7}><path d="M1 7a14.500 14.500 0 0 1 20 0" stroke="#bdbdbd" /><path d="M4 10.500a10.300 10.300 0 0 1 14 0M6.800 14a6.200 6.200 0 0 1 8.400 0" /><circle cx="11" cy="17" r="1.300" fill="#111" /></Ico></Slot>
    <Slot $w={36}><Ico w={23} h={20} sw={1.5}><path d="M1 7v6h4l5.500 5V2L5 7zM13.500 6.500c1.600 2 1.600 5 0 7M16.500 4c3 3.500 3 8.500 0 12M19.500 1.500c4 5 4 12 0 17" /></Ico></Slot>
    <Slot $w={36}><Ico w={24} h={16} sw={1.7}><rect x="1" y="1" width="19" height="14" rx="3" /><rect x="3.700" y="3.700" width="8.300" height="8.600" fill="#111" stroke="none" /><path d="M22.500 6.500v3" strokeWidth="2.200" /></Ico></Slot>
    <TwoLines $align="right" $w={112}>1:04 pm<br />04/07/2023</TwoLines>
    <Badge>4</Badge>
  </Taskbar>
);

export default function App() {
  return (
    <Window>
      <Global />
      <WindowTabs />
      <Browser>
        <Page>
          <BrowserToolbar />
          <Content>
            <Workbook>
              <Head>
                <BoxLogo>{Array.from({ length: 9 }, (_, i) => <i key={i} />)}</BoxLogo>
                <Titles>
                  <Title>9 Box Employee Ratings</Title>
                  <Subtitle>Select a box to drill to details.</Subtitle>
                </Titles>
                <Filter>
                  Employee Function
                  <Select>
                    (All)
                    <svg width="10" height="7" viewBox="0 0 10 7"><path d="M0 0h10L5 6.500z" fill="#222" /></svg>
                  </Select>
                </Filter>
              </Head>
              <Boxes>{boxes.map((b, i) => <RatingBox key={i} b={b} />)}</Boxes>
            </Workbook>
            <ScrollTrack>
              <svg width="14" height="10" viewBox="0 0 14 10"><path d="M7 0l7 9.500H0z" fill="#8b8b8b" /></svg>
              <Thumb />
              <svg width="14" height="10" viewBox="0 0 14 10"><path d="M7 10L0 .5h14z" fill="#8b8b8b" /></svg>
            </ScrollTrack>
          </Content>
        </Page>
        <SidePanel />
      </Browser>
      <Tasks />
    </Window>
  );
}
